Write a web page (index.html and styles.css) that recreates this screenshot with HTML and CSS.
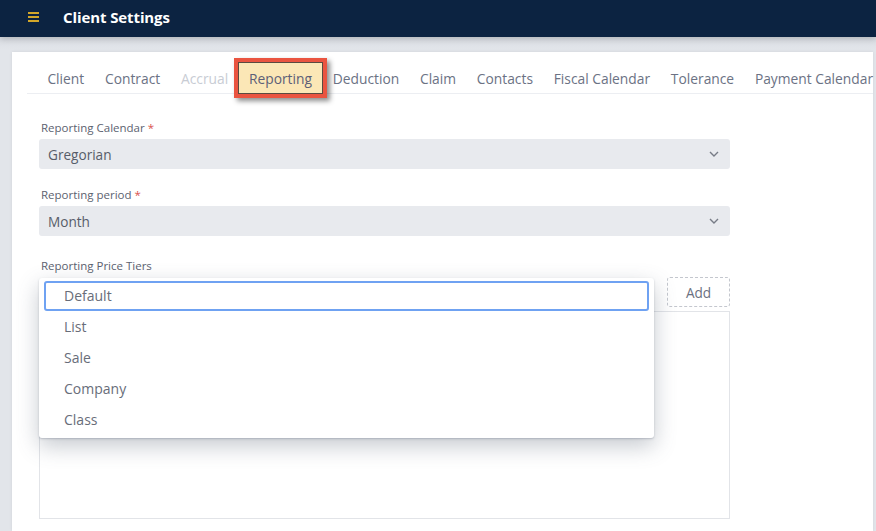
FILE: index.html
```html
<!DOCTYPE html>
<html lang="en">
<head>
<meta charset="utf-8">
<title>Client Settings</title>
<link rel="stylesheet" href="styles.css">
</head>
<body>
<header class="topbar">
  <span class="menu-icon" aria-hidden="true"><i></i><i></i><i></i></span>
  <h1 class="title">Client Settings</h1>
</header>
<main class="page">
  <section class="card">
    <nav class="tabs">
      <span class="tab">Client</span>
      <span class="tab">Contract</span>
      <span class="tab tab-disabled">Accrual</span>
      <span class="tab tab-active">Reporting</span>
      <span class="tab">Deduction</span>
      <span class="tab">Claim</span>
      <span class="tab">Contacts</span>
      <span class="tab">Fiscal Calendar</span>
      <span class="tab">Tolerance</span>
      <span class="tab">Payment Calendar</span>
    </nav>
    <form class="form">
      <div class="field">
        <label class="label">Reporting Calendar <span class="req">*</span></label>
        <div class="select"><span>Gregorian</span>
          <svg class="chev" viewBox="0 0 10 6" width="10" height="6"><path d="M1 1l4 4 4-4" fill="none" stroke="#777c86" stroke-width="1.4"/></svg>
        </div>
      </div>
      <div class="field">
        <label class="label">Reporting period <span class="req">*</span></label>
        <div class="select"><span>Month</span>
          <svg class="chev" viewBox="0 0 10 6" width="10" height="6"><path d="M1 1l4 4 4-4" fill="none" stroke="#777c86" stroke-width="1.4"/></svg>
        </div>
      </div>
      <div class="field field-tiers">
        <label class="label">Reporting Price Tiers</label>
        <div class="tier-row">
          <div class="tier-input"></div>
          <button type="button" class="add-btn">Add</button>
          <ul class="dropdown">
            <li class="opt opt-focus">Default</li>
            <li class="opt">List</li>
            <li class="opt">Sale</li>
            <li class="opt">Company</li>
            <li class="opt">Class</li>
          </ul>
        </div>
        <div class="tier-list"></div>
      </div>
    </form>
  </section>
</main>
</body>
</html>
```

FILE: styles.css
```css
* { box-sizing: border-box; }
html, body { margin: 0; padding: 0; height: 100%; }
body {
  font-family: "Open Sans", "Noto Sans", sans-serif;
  background: #dfe2e7;
  overflow: hidden;
}
.topbar {
  height: 37px;
  background: #0c2341;
  display: flex;
  align-items: center;
  padding: 0 0 4px 28px;
  position: relative;
  z-index: 2;
  box-shadow: 0 2px 6px rgba(0,0,0,.18);
}
.menu-icon {
  display: flex;
  flex-direction: column;
  gap: 2px;
  width: 11px;
  margin-right: 24px;
}
.menu-icon i {
  display: block;
  height: 2px;
  background: #d3a72a;
}
.title {
  margin: 0;
  color: #ffffff;
  font-size: 15px;
  font-weight: 700;
  letter-spacing: -0.1px;
}
.page {
  padding: 15px 3px 0 12px;
  height: calc(100% - 37px);
  background: linear-gradient(#d9dce2, #e2e5ea 12px);
}
.card {
  background: #ffffff;
  height: 100%;
  padding: 11px 0 0 15px;
  box-shadow: 0 0 3px rgba(0,0,0,.08);
}
.tabs {
  display: flex;
  height: 31px;
  padding-left: 10px;
  border-bottom: 1px solid #eceef2;
  white-space: nowrap;
}
.tab {
  padding: 0 10.4px;
  height: 30px;
  line-height: 31px;
  font-size: 13.8px;
  color: #6b7284;
}
.tab-disabled { color: #c8ccd4; }
.tab-active {
  background: #fbe7b6;
  color: #5d5f78;
  position: relative;
  box-shadow: 0 0 0 1px #5a4a40, 0 0 0 5px #ea5440, 3px 3px 5px 5px rgba(0,0,0,.45);
  z-index: 1;
}
.form {
  padding: 26px 0 0 12px;
  width: 703px;
}
.field { margin-bottom: 18px; }
.field-tiers { margin-top: 22px; }
.label {
  display: block;
  font-size: 11.5px;
  line-height: 15px;
  color: #5c6270;
  margin-left: 2px;
  margin-bottom: 4px;
}
.req { color: #d9534f; }
.select {
  height: 30px;
  border-radius: 3px;
  background: #e8eaee;
  display: flex;
  align-items: center;
  justify-content: space-between;
  padding: 0 11px 0 9px;
  font-size: 13.6px;
  color: #575d69;
}
.chev { display: block; }
.tier-row {
  position: relative;
  display: flex;
  gap: 8px;
  height: 34px;
  margin-top: 0;
}
.tier-input {
  flex: 1;
  height: 30px;
}
.add-btn {
  width: 63px;
  height: 30px;
  border: 1px dashed #c4c7ce;
  border-radius: 3px;
  background: #fff;
  font-family: inherit;
  font-size: 13.6px;
  color: #6b7080;
  padding: 0;
}
.tier-list {
  height: 208px;
  border: 1px solid #e2e4e8;
}
.dropdown {
  position: absolute;
  left: 0;
  top: 1px;
  width: 615px;
  margin: 0;
  padding: 3px 0 3px;
  list-style: none;
  background: #ffffff;
  border-radius: 3px;
  box-shadow: 0 1px 2px rgba(80,90,110,.3), 0 8px 22px rgba(80,90,110,.33);
  z-index: 5;
}
.opt {
  height: 31px;
  line-height: 31px;
  padding-left: 25px;
  font-size: 14px;
  color: #686d79;
}
.opt-focus {
  margin: 0 5px;
  height: 30px;
  line-height: 26px;
  padding-left: 18px;
  border: 2px solid #6fa2f2;
  border-radius: 3px;
}
```
